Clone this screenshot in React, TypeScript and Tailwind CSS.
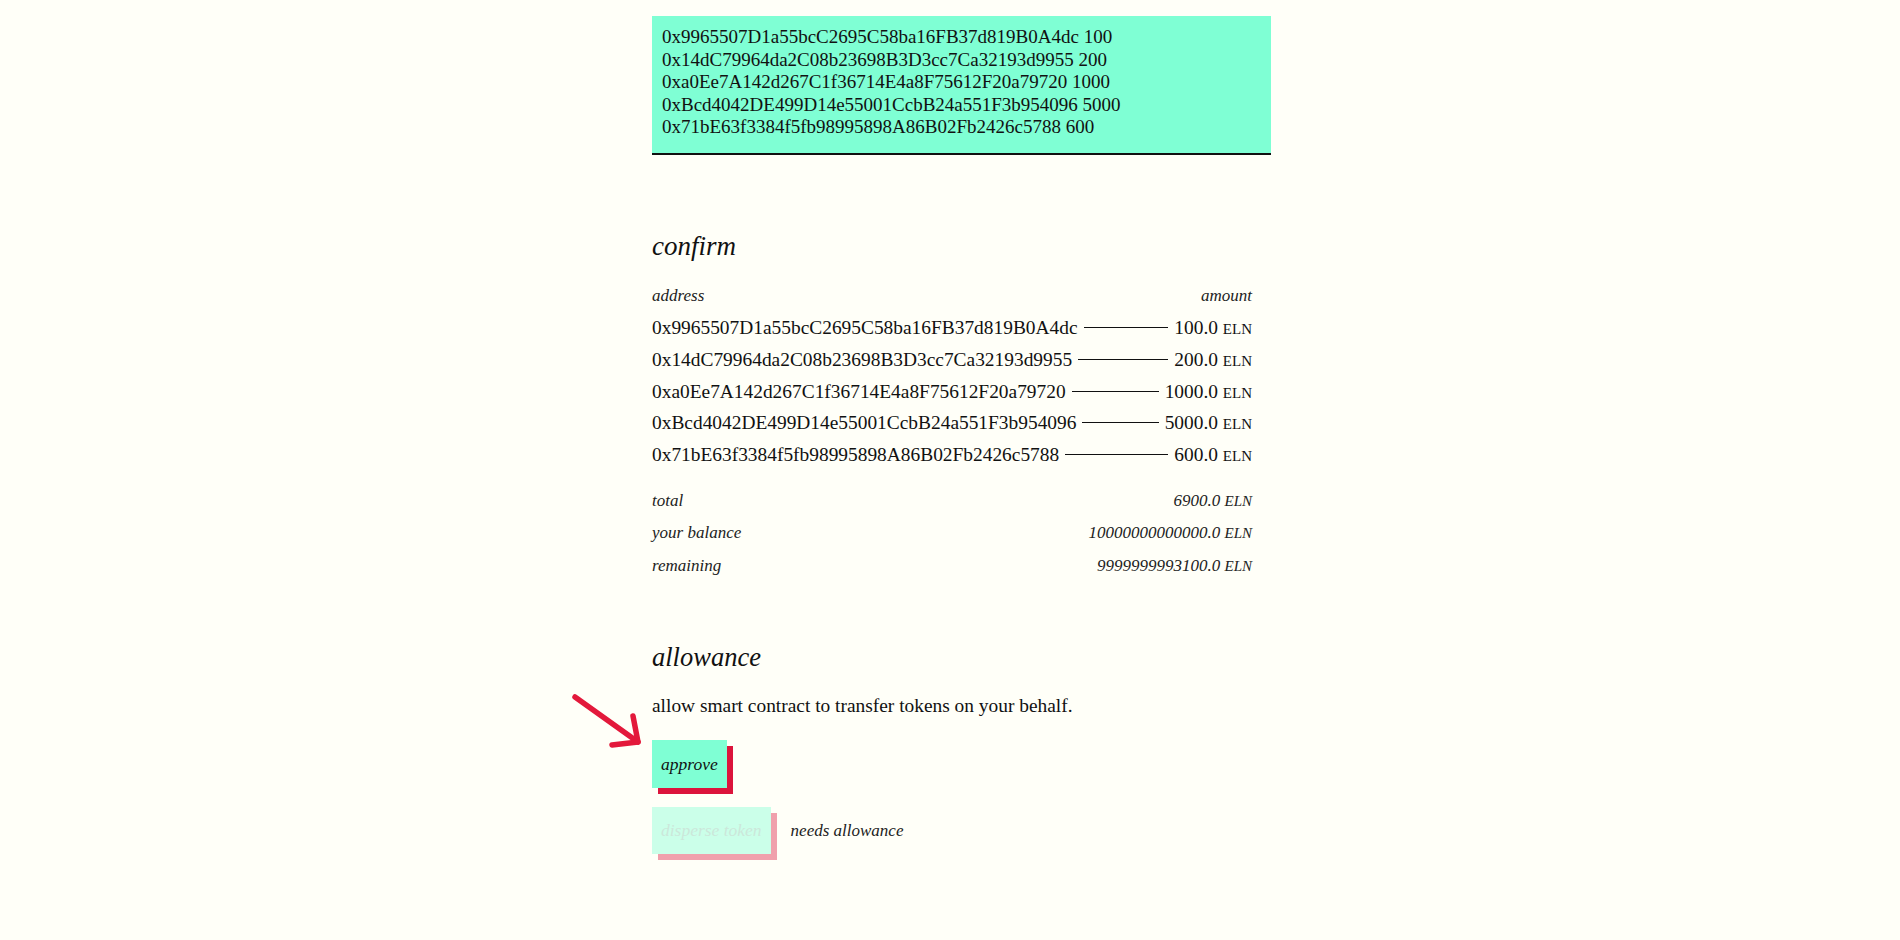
import { useState } from 'react'

const recipients = [
  { address: '0x9965507D1a55bcC2695C58ba16FB37d819B0A4dc', amount: '100' },
  { address: '0x14dC79964da2C08b23698B3D3cc7Ca32193d9955', amount: '200' },
  { address: '0xa0Ee7A142d267C1f36714E4a8F75612F20a79720', amount: '1000' },
  { address: '0xBcd4042DE499D14e55001CcbB24a551F3b954096', amount: '5000' },
  { address: '0x71bE63f3384f5fb98995898A86B02Fb2426c5788', amount: '600' },
]

const Unit = () => <span className="[font-variant:small-caps] text-[21px] leading-none">eln</span>

const Arrow = () => (
  <svg
    className="absolute left-[-80px] top-[-46px] pointer-events-none"
    width="72"
    height="56"
    viewBox="0 0 72 56"
    fill="none"
    stroke="#e3193b"
    strokeWidth={5.5}
    strokeLinecap="round"
    strokeLinejoin="round"
  >
    <path d="M3 3 L66 48" />
    <path d="M61 22 L66 48 L40 51" />
  </svg>
)

export default function App() {
  const [text, setText] = useState(
    recipients.map((r) => `${r.address} ${r.amount}`).join('\n')
  )

  return (
    <div className="min-h-screen w-full bg-[#fffff8] text-[#111111] font-['Liberation_Serif',serif]">
      <div className="mx-auto w-[604px] pl-[4px] pt-[16px] pb-[80px]">
        <textarea
          value={text}
          onChange={(e) => setText(e.target.value)}
          spellCheck={false}
          className="block w-[619px] h-[139px] resize-none bg-[#7fffd4] border-b-2 border-[#111111] px-[10px] pt-[10px] text-[19px] leading-[22.6px] outline-none font-['Liberation_Serif',serif]"
        />

        {/* confirm */}
        <h2 className="mt-[73px] text-[27px] italic leading-[36px]">confirm</h2>

        <div className="mt-[16px] flex justify-between italic text-[17px] leading-[32px] text-[#222]">
          <span>address</span>
          <span>amount</span>
        </div>

        <ul className="text-[19.4px]">
          {recipients.map((r) => (
            <li key={r.address} className="flex items-center h-[31.7px]">
              <span>{r.address}</span>
              <span className="flex-1 mx-[6px] border-t border-[#111111]" />
              <span>
                {r.amount}.0 <Unit />
              </span>
            </li>
          ))}
        </ul>

        <div className="mt-[14px] italic text-[17px] text-[#222]">
          <div className="flex justify-between items-center h-[32.5px]">
            <span>total</span>
            <span>6900.0 <Unit /></span>
          </div>
          <div className="flex justify-between items-center h-[32.5px]">
            <span>your balance</span>
            <span>10000000000000.0 <Unit /></span>
          </div>
          <div className="flex justify-between items-center h-[32.5px]">
            <span>remaining</span>
            <span>9999999993100.0 <Unit /></span>
          </div>
        </div>

        {/* allowance */}
        <h2 className="mt-[57px] text-[26.5px] italic leading-[36px]">allowance</h2>
        <p className="mt-[19px] text-[19.4px] leading-[24px]">
          allow smart contract to transfer tokens on your behalf.
        </p>

        <div className="relative mt-[22px]">
          <Arrow />
          <button className="h-[48px] px-[9px] bg-[#7fffd4] shadow-[6px_6px_0_#dc143c] italic text-[17.5px]">
            approve
          </button>
        </div>

        <div className="mt-[19px] flex items-center gap-[20px]">
          <button
            disabled
            className="h-[47px] px-[9px] bg-[#7fffd4] shadow-[6px_6px_0_#dc143c] italic text-[17.5px] text-[#7fc4ad] opacity-40"
          >
            disperse token
          </button>
          <span className="italic text-[17px] text-[#222]">needs allowance</span>
        </div>
      </div>
    </div>
  )
}
